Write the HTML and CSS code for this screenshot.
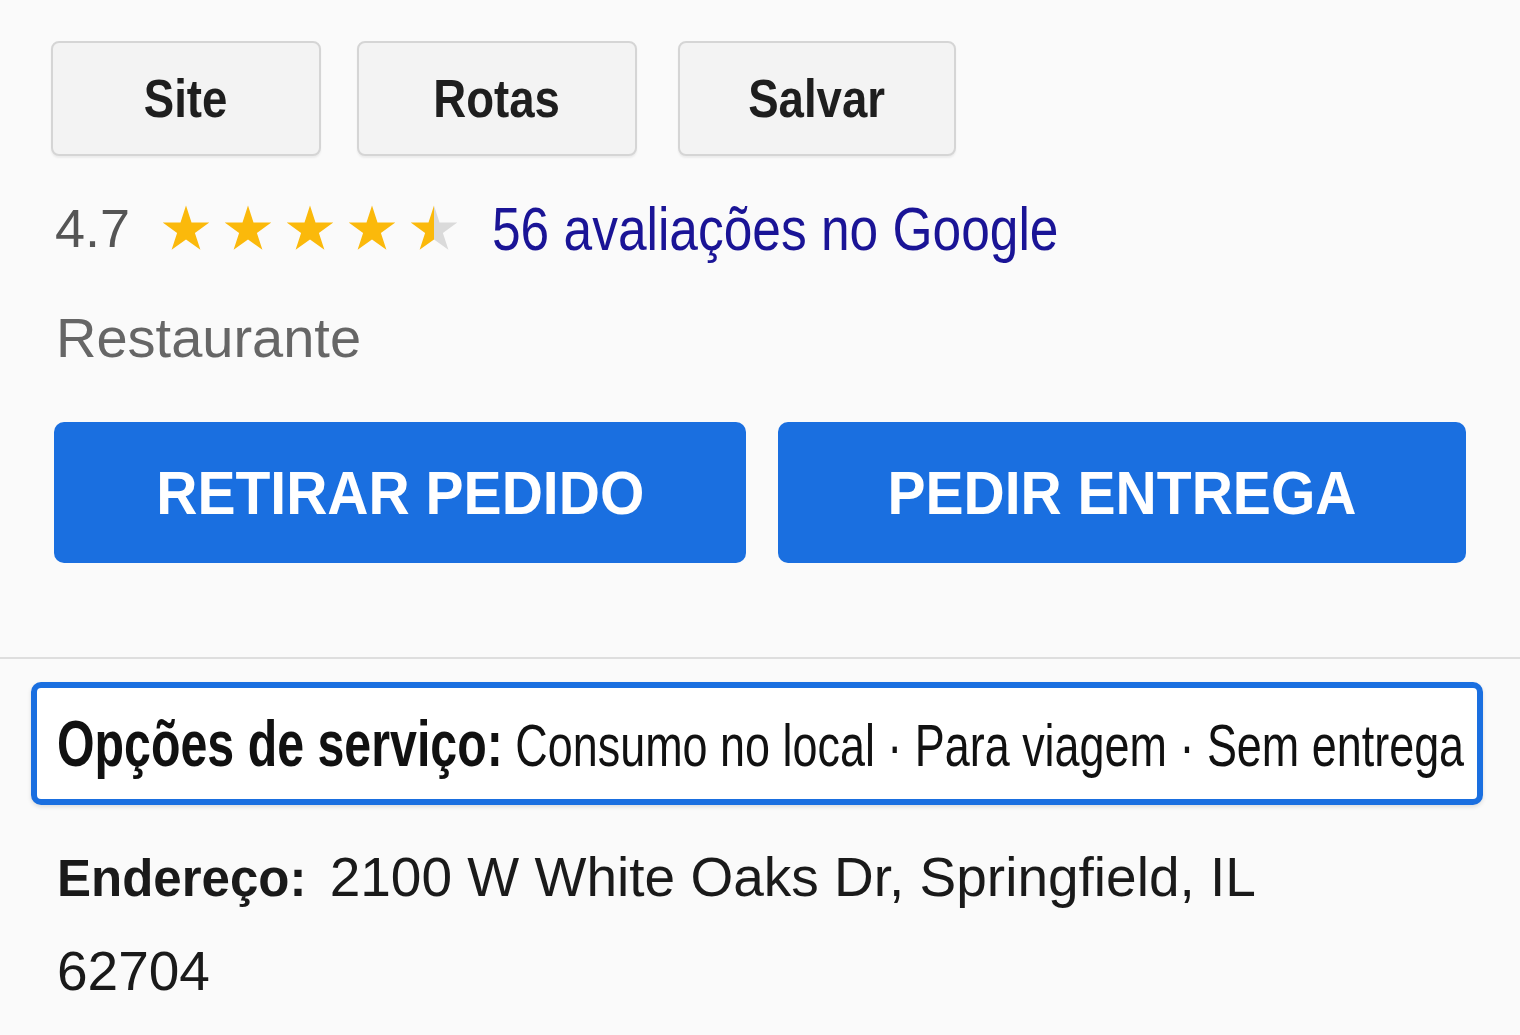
FILE: index.html
```html
<!DOCTYPE html>
<html lang="pt-BR">

<head>
  <meta charset="UTF-8">
  <meta name="viewport" content="width=device-width, initial-scale=1.0">
  <title>Restaurante</title>
  <link rel="stylesheet" href="styles.css">
</head>

<body>
  <div class="panel">
    <!-- botões de ação -->
    <div class="actions">
      <a href="javascript:;" class="btn btn-site"><span class="label">Site</span></a>
      <a href="javascript:;" class="btn btn-routes"><span class="label">Rotas</span></a>
      <a href="javascript:;" class="btn btn-save"><span class="label">Salvar</span></a>
    </div>

    <!-- avaliação -->
    <div class="rating">
      <span class="score">4.7</span>
      <span class="stars">
        <svg viewBox="0 0 48 46"><path class="full" d="M24 .5L29.5 17.4H47.3L32.9 27.9 38.4 44.8 24 34.4 9.6 44.8 15.1 27.9 .7 17.4H18.5Z"/></svg>
        <svg viewBox="0 0 48 46"><path class="full" d="M24 .5L29.5 17.4H47.3L32.9 27.9 38.4 44.8 24 34.4 9.6 44.8 15.1 27.9 .7 17.4H18.5Z"/></svg>
        <svg viewBox="0 0 48 46"><path class="full" d="M24 .5L29.5 17.4H47.3L32.9 27.9 38.4 44.8 24 34.4 9.6 44.8 15.1 27.9 .7 17.4H18.5Z"/></svg>
        <svg viewBox="0 0 48 46"><path class="full" d="M24 .5L29.5 17.4H47.3L32.9 27.9 38.4 44.8 24 34.4 9.6 44.8 15.1 27.9 .7 17.4H18.5Z"/></svg>
        <svg viewBox="0 0 48 46">
          <defs>
            <linearGradient id="half">
              <stop offset="50%" stop-color="#fbb90b"/>
              <stop offset="50%" stop-color="#dadada"/>
            </linearGradient>
          </defs>
          <path fill="url(#half)" d="M24 .5L29.5 17.4H47.3L32.9 27.9 38.4 44.8 24 34.4 9.6 44.8 15.1 27.9 .7 17.4H18.5Z"/>
        </svg>
      </span>
      <a href="javascript:;" class="reviews">56 avaliações no Google</a>
    </div>

    <div class="category">Restaurante</div>

    <!-- pedidos -->
    <div class="orders">
      <a href="javascript:;" class="order-btn order-pickup"><span class="label">RETIRAR PEDIDO</span></a>
      <a href="javascript:;" class="order-btn"><span class="label">PEDIR ENTREGA</span></a>
    </div>
  </div>

  <hr class="divider">

  <div class="service">
    <span class="service-text"><b>Opções de serviço:</b> Consumo no local · Para viagem · Sem entrega</span>
  </div>

  <p class="address"><b class="address-label">Endereço:</b> 2100 W White Oaks Dr, Springfield, IL 62704</p>
</body>

</html>
```

FILE: styles.css
```css
* {
  margin: 0;
  padding: 0;
  box-sizing: border-box;
}

a {
  text-decoration: none;
}

body {
  background-color: #fafafa;
  font-family: "Liberation Sans", Arial, sans-serif;
  color: #1f1f1f;
}

.panel {
  padding: 41px 54px 0 51px;
}

/* botões de ação */
.actions {
  display: flex;
}

.btn {
  display: flex;
  align-items: center;
  justify-content: center;
  height: 115px;
  background-color: #f3f3f3;
  border: 2px solid #d5d5d5;
  border-radius: 8px;
  box-shadow: 0 2px 2px rgba(0, 0, 0, .06);
  font-size: 53px;
  font-weight: bold;
  color: #1e1e1e;
}

.btn .label {
  display: inline-block;
  transform: scaleX(.86);
}

.btn-site {
  width: 270px;
}

.btn-routes {
  width: 280px;
  margin-left: 36px;
}

.btn-save {
  width: 278px;
  margin-left: 41px;
}

/* avaliação */
.rating {
  display: flex;
  align-items: center;
  height: 70px;
  margin-top: 37px;
  padding-left: 4px;
}

.score {
  font-size: 54px;
  color: #555;
}

.stars {
  display: flex;
  gap: 14px;
  margin-left: 32px;
}

.stars svg {
  width: 48px;
  height: 46px;
}

.stars .full {
  fill: #fbb90b;
}

.reviews {
  display: inline-block;
  margin-left: 34px;
  font-size: 62px;
  color: #1a1496;
  transform: scaleX(.83);
  transform-origin: left center;
}

.category {
  height: 70px;
  line-height: 70px;
  margin-top: 40px;
  padding-left: 5px;
  font-size: 56px;
  color: #666;
}

/* pedidos */
.orders {
  display: flex;
  gap: 32px;
  margin-top: 49px;
  padding-left: 3px;
}

.order-btn {
  flex: 1;
  display: flex;
  align-items: center;
  justify-content: center;
  height: 141px;
  background-color: #1a6fe0;
  border-radius: 10px;
  font-size: 62px;
  font-weight: bold;
  color: #fff;
}

.order-pickup {
  flex: 0 0 692px;
}

.order-btn .label {
  display: inline-block;
  transform: scaleX(.92);
}

.divider {
  margin-top: 94px;
  border: none;
  border-top: 2px solid #dedede;
}

/* opções de serviço */
.service {
  display: flex;
  align-items: center;
  height: 123px;
  margin: 23px 37px 0 31px;
  padding-left: 20px;
  background-color: #fff;
  border: 6px solid #1a6fe0;
  border-radius: 10px;
  box-shadow: 0 2px 4px rgba(0, 0, 0, .12);
  overflow: hidden;
}

.service-text {
  display: inline-block;
  font-size: 59.5px;
  color: #111;
  white-space: nowrap;
  transform: scaleX(.755);
  transform-origin: left center;
}

.service-text b {
  font-size: 64px;
}

.address {
  max-width: 1300px;
  margin-top: 26px;
  padding-left: 57px;
  font-size: 55px;
  line-height: 93px;
  color: #1a1a1a;
}

.address-label {
  margin-right: 8px;
  font-size: 51px;
}
```
